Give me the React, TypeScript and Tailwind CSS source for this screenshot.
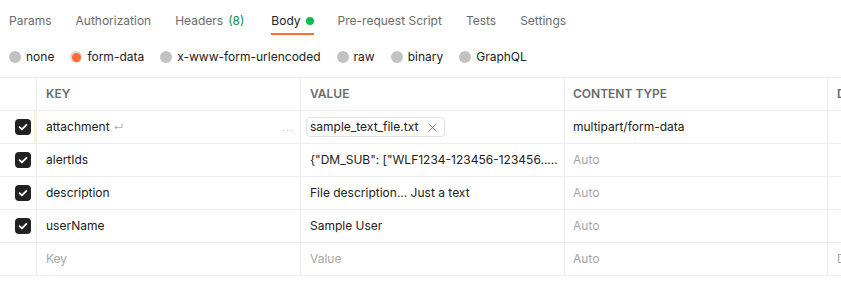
import { X } from "lucide-react";

const tabs = [
  { label: "Params" },
  { label: "Authorization" },
  { label: "Headers", count: "(8)" },
  { label: "Body", active: true, dot: true },
  { label: "Pre-request Script" },
  { label: "Tests" },
  { label: "Settings" },
];

const modes = ["none", "form-data", "x-www-form-urlencoded", "raw", "binary", "GraphQL"];

type Row = {
  key: string;
  value?: string;
  file?: string;
  type?: string;
  placeholder?: boolean;
  checked?: boolean;
};

const rows: Row[] = [
  { key: "attachment", file: "sample_text_file.txt", type: "multipart/form-data", checked: true },
  { key: "alertIds", value: '{"DM_SUB": ["WLF1234-123456-123456........"]}', checked: true },
  { key: "description", value: "File description... Just a text", checked: true },
  { key: "userName", value: "Sample User", checked: true },
  { key: "Key", value: "Value", placeholder: true },
];

function Checkbox() {
  return (
    <div className="w-4 h-4 rounded-[4px] bg-[#212121] flex items-center justify-center">
      <svg width="10" height="10" viewBox="0 0 10 10" fill="none">
        <path d="M1.6 5.2l2.3 2.2L8.4 2.8" stroke="#fff" strokeWidth="1.8" strokeLinecap="round" strokeLinejoin="round" />
      </svg>
    </div>
  );
}

export default function App() {
  return (
    <div
      className="w-[841px] h-[283px] bg-white overflow-hidden text-[12px] text-[#212121]"
      style={{ fontFamily: "Inter, 'Noto Sans', sans-serif" }}
    >
      {/* Tabs */}
      <div className="flex items-stretch h-[35px] pl-[9px] gap-[24px]">
        {tabs.map((t) => (
          <div
            key={t.label}
            className={`flex items-center gap-[5px] pt-[8px] border-b-2 ${
              t.active ? "border-[#ff6c37] text-[#212121]" : "border-transparent text-[#6b6b6b]"
            } ${t.count ? "mr-[3px]" : ""}`}
          >
            <span>{t.label}</span>
            {t.count && <span className="text-[#0a8c45]">{t.count}</span>}
            {t.dot && <span className="w-[8px] h-[8px] rounded-full bg-[#0cbb52]" />}
          </div>
        ))}
      </div>

      {/* Body modes */}
      <div className="flex items-center h-[42px] pl-[9px] pt-[2px] gap-[16px]">
        {modes.map((m) => (
          <div key={m} className="flex items-center gap-[5px]">
            {m === "form-data" ? (
              <span className="w-[12px] h-[12px] rounded-full bg-[#dcdcdc] flex items-center justify-center">
                <span className="w-[9px] h-[9px] rounded-full bg-[#ff6c37]" />
              </span>
            ) : (
              <span className="w-[12px] h-[12px] rounded-full bg-[#c2c2c2]" />
            )}
            <span>{m}</span>
          </div>
        ))}
      </div>

      {/* Table */}
      <div className="border-t border-[#ededed]">
        <div className="flex h-[33px] border-b border-[#ededed] text-[12px] font-semibold text-[#6b6b6b] uppercase">
          <div className="w-[37px] shrink-0 border-r border-[#ededed]" />
          <div className="w-[264px] shrink-0 border-r border-[#ededed] pl-[9px] flex items-center">Key</div>
          <div className="w-[264px] shrink-0 border-r border-[#ededed] pl-[9px] flex items-center">Value</div>
          <div className="w-[263px] shrink-0 border-r border-[#ededed] pl-[8px] flex items-center">Content Type</div>
          <div className="pl-[9px] flex items-center whitespace-nowrap">D</div>
        </div>

        {rows.map((r, i) => (
          <div key={i} className="flex h-[33px] border-b border-[#ededed]">
            <div className="w-[37px] shrink-0 border-r border-[#ededed] flex items-center justify-between pl-[15px]">
              {r.checked ? <Checkbox /> : <span />}
              {i === 0 ? <span className="w-[2px] h-full bg-[#fff4cc]" /> : <span />}
            </div>
            <div className="w-[264px] shrink-0 border-r border-[#ededed] pl-[9px] pr-[4px] flex items-center">
              <span className={r.placeholder ? "text-[#a6a6a6]" : ""}>{r.key}</span>
              {i === 0 && (
                <>
                  <span className="ml-[4px] text-[10px] text-[#b0b0b0]">↵</span>
                  <span className="ml-auto mr-[2px] text-[10px] text-[#b0b0b0] tracking-[1px]">...</span>
                </>
              )}
            </div>
            <div className="w-[264px] shrink-0 border-r border-[#ededed] pl-[5px] pr-[3px] flex items-center min-w-0">
              {r.file ? (
                <div className="flex items-center h-[20px] pl-[3px] pr-[4px] border border-[#e3e3e3] rounded-[4px] gap-[7px]">
                  <span>{r.file}</span>
                  <X size={15} strokeWidth={1.3} className="text-[#6b6b6b]" />
                </div>
              ) : (
                <span className={`pl-[4px] truncate ${r.placeholder ? "text-[#a6a6a6]" : ""}`}>{r.value}</span>
              )}
            </div>
            <div className="w-[263px] shrink-0 border-r border-[#ededed] pl-[8px] flex items-center">
              {r.type ? <span>{r.type}</span> : <span className="text-[#a6a6a6]">Auto</span>}
            </div>
            <div className="pl-[9px] flex items-center whitespace-nowrap text-[#a6a6a6]">
              {r.placeholder ? "D" : ""}
            </div>
          </div>
        ))}
      </div>
    </div>
  );
}
